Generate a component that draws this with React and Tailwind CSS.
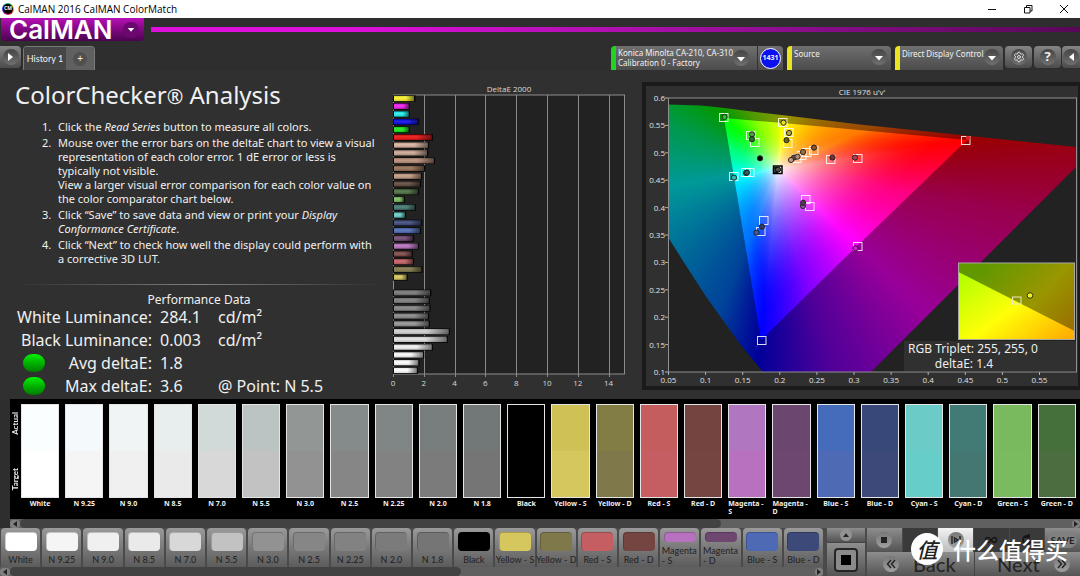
import React from "react";
import { Settings } from "lucide-react";

const patches = [
  ["White", "#fbfeff", "#ffffff"],
  ["N 9.25", "#f4f9fb", "#f5f5f5"],
  ["N 9.0", "#f0f4f5", "#f0f0f0"],
  ["N 8.5", "#e8eeee", "#eaeaea"],
  ["N 7.0", "#d1dad9", "#d8d8d8"],
  ["N 5.5", "#bbc4c3", "#c2c2c2"],
  ["N 3.0", "#929795", "#929292"],
  ["N 2.5", "#858b8a", "#868686"],
  ["N 2.25", "#808686", "#828282"],
  ["N 2.0", "#787e7e", "#7b7b7b"],
  ["N 1.8", "#717877", "#757575"],
  ["Black", "#000000", "#000000"],
  ["Yellow - S", "#d0c156", "#d5c65e"],
  ["Yellow - D", "#817d45", "#7f784a"],
  ["Red - S", "#c45d5e", "#c45e62"],
  ["Red - D", "#734440", "#744541"],
  ["Magenta - S", "#b077c0", "#b771be"],
  ["Magenta - D", "#6b466e", "#6d4770"],
  ["Blue - S", "#456bbb", "#4e6ab5"],
  ["Blue - D", "#384878", "#3c4979"],
  ["Cyan - S", "#6bcbc6", "#66cdc8"],
  ["Cyan - D", "#427b76", "#447772"],
  ["Green - S", "#7aba5e", "#7abb60"],
  ["Green - D", "#46703b", "#4b6e40"],
];

const bars = [
  ["#f6f22c", 1.36], ["#f21cf0", 1], ["#1ff0f0", 1], ["#0808e8", 1.6],
  ["#18e818", 1], ["#ee1010", 2.5], ["#d8b2a0", 2.25], ["#cba593", 2.2],
  ["#b98d76", 2.63], ["#936c52", 2], ["#c39a84", 1.8], ["#5d473c", 1.73],
  ["#4b6e40", 1.6], ["#7abb60", 0.68], ["#447772", 1.4], ["#66cdc8", 0.75],
  ["#3c4979", 1.8], ["#4e6ab5", 1.73], ["#6d4770", 1.27], ["#b771be", 1.6],
  ["#7c4844", 1.2], ["#c45e62", 1.27], ["#7f784a", 1.83], ["#d5c65e", 0.87],
  ["#000000", 0], ["#757575", 2.4], ["#7b7b7b", 2.3], ["#828282", 2.35],
  ["#868686", 2.25], ["#929292", 2.3], ["#d0d0d0", 3.6], ["#e0e0e0", 3.47],
  ["#f2f2f2", 2.5], ["#fafafa", 1.93], ["#ffffff", 1.63], ["#ffffff", 1.53],
];

const targets = [
  [723.5, 117.5], [782.5, 122.5], [965.5, 140.5], [857.5, 246.5], [761.5, 340.5],
  [733.5, 176.5], [750.5, 135.5], [754.5, 142.5], [788.5, 132.5], [787.5, 143.5],
  [813.5, 150.5], [806.5, 152.5], [801.5, 155.5], [796.5, 158.5], [830.5, 159.5],
  [857.5, 158.5], [749.5, 172.5], [745.5, 172.5], [805.5, 199.5], [809.5, 206.5],
  [763.5, 220.5], [760.5, 231.5],
];

const readings = [
  [724.5, 117, "#22c522"], [783.5, 122.7, "#e8e020"], [789, 133, "#b0a850"],
  [786.5, 140.2, "#6b6322"], [752, 134.3, "#4e9a3e"], [752, 139.2, "#2f6a30"],
  [760, 158.3, "#000000"], [734, 177.7, "#30b8b8"], [746, 173, "#3a6f70"],
  [747, 172.5, "#2f5f62"], [794, 157.5, "#6f4c3c"], [791, 160, "#c09880"],
  [797.5, 156.7, "#b08c78"], [803, 152, "#a07040"], [814, 147.6, "#8a5030"],
  [832.5, 157.5, "#7a3030"], [855, 157.6, "#b04050"], [803, 206, "#94509a"],
  [803.2, 202.8, "#583858"], [762, 226.7, "#303c70"], [756.5, 232.6, "#4458a0"],
  [855.5, 248.3, "#d020d0"],
];

const white = [778, 169];
const gamut = [[724, 118], [783, 123], [967, 140], [857, 246], [761, 340], [734, 177]];
const steps = 60;
const whiteness = (s) => Math.pow(1 - s, 1.9);
const shells = Array.from({ length: steps }, (_, k) => {
  const s = 1 - (k + 1) / (steps + 1);
  const prev = whiteness(1 - k / (steps + 1));
  return {
    points: gamut
      .map(([x, y]) => `${white[0] + s * (x - white[0])},${white[1] + s * (y - white[1])}`)
      .join(" "),
    alpha: 1 - (1 - whiteness(s)) / (1 - prev),
  };
});

const wheel =
  "bg-[conic-gradient(from_0deg_at_110px_71px,#d8ff00_0deg,#ffff00_6deg,#ff7800_66deg,#ff0000_81deg,#ff0080_100deg,#ff00ff_134deg,#8000ff_166deg,#0000ff_186deg,#0070ff_202deg,#00ffff_261deg,#00ff80_292deg,#00ff00_314deg,#80ff00_334deg,#d8ff00_360deg)]";

const raised = "bg-linear-to-b from-[#6f6f6f] to-[#4c4c4c]";
const well = "flex size-4 shrink-0 items-center justify-center rounded-full bg-linear-to-b from-[#454545] to-[#707070]";

function DropArrow() {
  return (
    <span className={well}>
      <svg viewBox="0 0 8 5" className="mt-0.5 h-[5px] w-2" aria-hidden="true">
        <path d="M0 0H8L4 4.6Z" fill="#fff" />
      </svg>
    </span>
  );
}

function DeltaEChart() {
  const x = (v) => 393 + v * 15.4;
  return (
    <svg viewBox="386 80 255 319" className="w-full font-['Open_Sans',sans-serif]" role="img" aria-label="DeltaE 2000">
      <defs>
        <linearGradient id="barEnd" x1="0" x2="1" y1="0" y2="0">
          <stop offset="0.6" stopColor="#000" stopOpacity="0" />
          <stop offset="1" stopColor="#000" stopOpacity="0.5" />
        </linearGradient>
        <linearGradient id="barShade" x1="0" x2="0" y1="0" y2="1">
          <stop offset="0" stopColor="#000" stopOpacity="0.12" />
          <stop offset="0.4" stopColor="#fff" stopOpacity="0.12" />
          <stop offset="1" stopColor="#000" stopOpacity="0.15" />
        </linearGradient>
      </defs>
      <rect x="393.5" y="95" width="231" height="279" fill="#222" stroke="#8c8c8c" />
      {[2, 4, 6, 8, 10, 12, 14].map((v) => (
        <path key={v} d={`M${Math.round(x(v)) + 0.5} 95V377`} stroke="#8a8a8a" />
      ))}
      <path d="M393.5 374V377" stroke="#8a8a8a" />
      {bars.map(([color, v], i) =>
        v === 0 ? null : (
          <g key={i}>
            <rect x="393" y={95.3 + i * 7.77} width={v * 15.4 + 1.5} height="6.6" fill="#080808" />
            <rect x="394" y={95.9 + i * 7.77} width={v * 15.4 - 1} height="5.2" fill={color} />
            <rect x="394" y={95.9 + i * 7.77} width={v * 15.4 - 1} height="5.2" fill="url(#barShade)" />
            <rect x="394" y={95.9 + i * 7.77} width={v * 15.4 - 1} height="5.2" fill="url(#barEnd)" />
          </g>
        )
      )}
      <g fill="#d8d8d8" textAnchor="middle" className="text-[8px]">
        <text x="509" y="92">DeltaE 2000</text>
        {[0, 2, 4, 6, 8, 10, 12, 14].map((v) => (
          <text key={v} x={x(v)} y="386">{v}</text>
        ))}
      </g>
    </svg>
  );
}

function CieChart() {
  const ys = ["0.6", "0.55", "0.5", "0.45", "0.4", "0.35", "0.3", "0.25", "0.2", "0.15", "0.1"];
  const xs = ["0.05", "0.1", "0.15", "0.2", "0.25", "0.3", "0.35", "0.4", "0.45", "0.5", "0.55"];
  return (
    <svg viewBox="641 80 439 319" className="w-full" role="img" aria-label="CIE 1976 u'v'">
      <defs>
        <clipPath id="locus">
          <path d="M668 104.5L700 105.5Q716 106.500 740 110L790 116L860 124.500L1076 147V167L1013 230L871 372H763L740 344L707 298Q686 266 668 237Z" />
        </clipPath>
        <clipPath id="gamut">
          <polygon points={gamut.map((p) => p.join(",")).join(" ")} />
        </clipPath>
        <linearGradient id="insetOuter" x1="0" x2="1" y1="0.2" y2="0.8">
          <stop offset="0.1" stopColor="#619800" />
          <stop offset="0.62" stopColor="#999600" />
          <stop offset="1" stopColor="#997000" />
        </linearGradient>
        <linearGradient id="insetInner" x1="0" x2="1" y1="0.1" y2="0.9">
          <stop offset="0" stopColor="#b4ff00" />
          <stop offset="0.5" stopColor="#ffff08" />
          <stop offset="1" stopColor="#ffae00" />
        </linearGradient>
      </defs>
      <rect x="642" y="82" width="438" height="308" fill="#1b1b1b" />
      <rect x="646" y="86" width="432" height="300" fill="#303030" />
      <rect x="668.5" y="98" width="408" height="274" fill="#222" />
      <g clipPath="url(#locus)">
        <foreignObject x="668" y="98" width="408" height="274">
          <div className={`h-[274px] w-[408px] brightness-60 ${wheel}`} />
        </foreignObject>
      </g>
      <g clipPath="url(#gamut)">
        <foreignObject x="668" y="98" width="408" height="274">
          <div className={`h-[274px] w-[408px] ${wheel}`} />
        </foreignObject>
      </g>
      {shells.map((s, i) => (
        <polygon key={i} points={s.points} fill="#fff" fillOpacity={s.alpha} />
      ))}
      <rect x="668.5" y="98" width="408" height="274" fill="none" stroke="#909090" />
      <g stroke="#b0b0b0">
        {ys.map((v, i) => (
          <path key={v} d={`M665 ${98 + i * 27.4}H668`} />
        ))}
        {xs.map((v, i) => (
          <path key={v} d={`M${668.5 + i * 37.1} 372V375`} />
        ))}
      </g>
      <g fill="none" stroke="#fff">
        {targets.map(([x, y], i) => (
          <rect key={i} x={x - 4} y={y - 4} width="8.500" height="8" strokeOpacity="0.85" />
        ))}
      </g>
      <rect x="773.5" y="166" width="8.500" height="7.500" fill="#fff" stroke="#000" strokeWidth="1.5" />
      <circle cx="776" cy="170" r="2.8" fill="#444" stroke="#000" />
      <circle cx="778" cy="169.500" r="2.600" fill="#555" stroke="#000" />
      {readings.map(([x, y, c], i) => (
        <circle key={i} cx={x} cy={y} r="2.6" fill={c} stroke="#1c1c1c" strokeWidth="0.9" />
      ))}
      <circle cx="968" cy="138" r="2.300" fill="#e02020" />
      <circle cx="757" cy="347" r="1.800" fill="#1010b4" />
      <rect x="904" y="341" width="172" height="30" fill="#303030" />
      <rect x="958.5" y="263" width="116" height="76.500" fill="url(#insetOuter)" />
      <path d="M958.500 272L1074.500 331V339.500H958.500Z" fill="url(#insetInner)" />
      <rect x="958.5" y="263" width="116" height="76.5" fill="none" stroke="#a8a8a0" />
      <rect x="1012.500" y="297" width="8.500" height="7" fill="none" stroke="#eee8c0" />
      <circle cx="1030" cy="295.500" r="2.800" fill="#f4f020" stroke="#333300" />
      <g fill="#e0e0e0" className="font-['Open_Sans',sans-serif] text-[8px]">
        <text x="862" y="95" textAnchor="middle">CIE 1976 u&apos;v&apos;</text>
        {ys.map((v, i) => (
          <text key={v} x="665" y={101 + i * 27.4} textAnchor="end">{v}</text>
        ))}
        {xs.map((v, i) => (
          <text key={v} x={668.5 + i * 37.1} y="383" textAnchor="middle">{v}</text>
        ))}
      </g>
      <g fill="#eee" className="text-[12px]" textAnchor="middle">
        <text x="973" y="353">RGB Triplet: 255, 255, 0</text>
        <text x="964" y="368">deltaE: 1.4</text>
      </g>
    </svg>
  );
}

function Metric({ label, value, note, ok }) {
  return (
    <div className="flex h-[23px] items-center text-[16px]">
      <dt className="flex w-[152px] items-center justify-end">
        {ok && (
          <span className="mr-auto ml-[23px] h-[18px] w-[22px] rounded-full bg-linear-to-b from-[#00f000] to-[#007a00]" />
        )}
        <span className="whitespace-nowrap">{label}</span>
      </dt>
      <dd className="ml-2 w-[58px]">{value}</dd>
      <dd className="whitespace-nowrap">{note}</dd>
    </div>
  );
}

function ScrollRow({ thumb }) {
  return (
    <div className="flex h-[9px] items-center bg-[#606060]">
      <button aria-label="Scroll left" className="flex h-2 w-2.5 items-center justify-center rounded-sm bg-[#808080]">
        <svg viewBox="0 0 4 6" className="h-1.5 w-1"><path d="M4 0V6L0 3Z" fill="#222" /></svg>
      </button>
      <div className="h-full flex-1">
        <div className={`h-full rounded-full bg-[#424242] ${thumb}`} />
      </div>
      <button aria-label="Scroll right" className="flex h-2 w-2 items-center justify-center rounded-sm bg-[#808080]">
        <svg viewBox="0 0 4 6" className="h-1.5 w-1"><path d="M0 0V6L4 3Z" fill="#222" /></svg>
      </button>
    </div>
  );
}

const metal = "bg-linear-to-b from-[#8e8e8e] to-[#545454]";
const knob = "flex size-4 items-center justify-center rounded-full bg-linear-to-b from-[#777] to-[#a0a0a0] text-[#222]";
const tool = "flex h-[22px] items-center justify-center bg-linear-to-b from-[#858585] to-[#4c4c4c]";

export default function App() {
  return (
    <div className="flex min-h-screen flex-col overflow-hidden bg-[#2e2e2e] font-['Noto_Sans','Noto_Sans_CJK_SC',sans-serif] text-[#f0f0f0]">
      <header>
        <div className="flex h-[18px] items-center bg-white text-black">
          <span className="ml-0.5 flex size-3 items-center justify-center rounded-full bg-[conic-gradient(#00c060,#e8d020,#e02020,#c020c0,#2040e0,#00c060)]">
            <span className="flex size-2.5 items-center justify-center rounded-full bg-black text-[5px] font-bold text-white">CM</span>
          </span>
          <h1 className="ml-1 font-['Open_Sans',sans-serif] text-[10px]">CalMAN 2016 CalMAN ColorMatch</h1>
          <div className="ml-auto flex items-center gap-[26px] pr-[11px]">
            <button aria-label="Minimize">
              <svg viewBox="0 0 10 10" className="size-2.5"><path d="M1 5.500H9" stroke="#111" /></svg>
            </button>
            <button aria-label="Restore">
              <svg viewBox="0 0 10 10" className="size-2.5" fill="none" stroke="#111">
                <path d="M1.500 3.500H7V9H1.500ZM3.500 3.500V1.500H9V7H7" />
              </svg>
            </button>
            <button aria-label="Close">
              <svg viewBox="0 0 10 10" className="size-2.5"><path d="M1 1L9 9M9 1L1 9" stroke="#111" /></svg>
            </button>
          </div>
        </div>
        <div className="flex h-[23px] items-center">
          <button className="ml-px flex h-full w-[143px] items-center justify-between rounded-b-sm bg-linear-to-b from-[#b80fb6] to-[#4c0350] pr-[5px] pl-2 font-['Inter','Open_Sans',sans-serif] text-[26px] leading-[23px] font-semibold text-white">
            CalMAN
            <span className="flex size-4 items-center justify-center rounded-full bg-[#6a0870]">
              <svg viewBox="0 0 8 5" className="h-1 w-2"><path d="M0 0H8L4 4.600Z" fill="#fff" /></svg>
            </span>
          </button>
          <div className="ml-[7px] h-[5px] flex-1 bg-linear-to-r from-[#e010dc] from-20% via-[#b010b0] via-50% to-[#580858]" />
        </div>
        <nav className="flex h-[29px] items-end justify-between text-[8px]">
          <div className="flex">
            <button aria-label="Expand" className={`mb-0.5 w-[21px] rounded-r ${tool}`}>
              <span className={well}>
                <svg viewBox="0 0 5 8" className="h-2 w-[5px]"><path d="M0 0V8L5 4Z" fill="#fff" /></svg>
              </span>
            </button>
            <div className="ml-0.5 flex h-6 overflow-hidden rounded-t border border-b-0 border-[#7a7a7a]">
              <button className="w-[42px] bg-[#464646] font-['Lato',sans-serif] text-[9px] whitespace-nowrap">History 1</button>
              <button aria-label="Add tab" className="flex w-7 items-center justify-center bg-[#606060]">
                <span className="flex size-3.5 items-center justify-center rounded-full bg-[#505050] text-[10px]">+</span>
              </button>
            </div>
          </div>
          <div className="flex">
            <div className={`flex h-6 w-[172px] overflow-hidden rounded-t border-l-[5px] border-[#22d422] ${raised}`}>
              <button className="flex flex-1 items-center justify-between pr-2 pl-0.5 text-left leading-[10px] whitespace-nowrap">
                <span>Konica Minolta CA-210, CA-310<br />Calibration 0 - Factory</span>
                <DropArrow />
              </button>
              <div className="flex w-7 items-center justify-center border-l border-[#333]">
                <span className="flex size-[21px] items-center justify-center rounded-full border border-white bg-[#0c10ee] text-[7px] font-bold">1431</span>
              </div>
            </div>
            <button className={`ml-1 flex h-6 w-[104px] justify-between rounded-t border-l-[5px] border-[#eae51e] pt-[3px] pr-1 pl-0.5 leading-[10px] ${raised}`}>
              Source<DropArrow />
            </button>
            <button className={`ml-1 flex h-6 w-[108px] justify-between rounded-t border-l-[5px] border-[#eae51e] pt-[3px] pr-1 pl-0.5 leading-[10px] whitespace-nowrap ${raised}`}>
              Direct Display Control<DropArrow />
            </button>
            <button aria-label="Settings" className={`ml-0.5 w-[27px] rounded ${tool}`}>
              <span className={well}><Settings className="size-3 text-[#ddd]" /></span>
            </button>
            <button aria-label="Help" className={`ml-0.5 w-[27px] rounded text-[13px] font-bold ${tool}`}>
              <span className={well}>?</span>
            </button>
            <button aria-label="Collapse" className={`ml-px w-[18px] rounded-l ${tool}`}>
              <span className={well}>
                <svg viewBox="0 0 5 8" className="h-2 w-[5px]"><path d="M5 0V8L0 4Z" fill="#fff" /></svg>
              </span>
            </button>
          </div>
        </nav>
      </header>

      <main className="grid grid-cols-[386fr_255fr_439fr] bg-[#303030] pt-2.5">
        <section className="min-w-0">
          <h2 className="pl-[15px] text-[24px] leading-[30px] whitespace-nowrap">ColorChecker<span className="text-[20px]">®</span> Analysis</h2>
          <ol className="mt-2 flex list-decimal flex-col gap-0.5 pl-[54px] text-[11px] leading-[14px] [&>li]:pl-1">
            <li>Click the <em>Read Series</em> button to measure all colors.</li>
            <li className="whitespace-nowrap">
              Mouse over the error bars on the deltaE chart to view a visual<br />
              representation of each color error. 1 dE error or less is<br />
              typically not visible.<br />
              View a larger visual error comparison for each color value on<br />
              the color comparator chart below.
            </li>
            <li className="whitespace-nowrap">Click “Save” to save data and view or print your <em>Display<br />Conformance Certificate</em>.</li>
            <li className="whitespace-nowrap">Click “Next” to check how well the display could perform with<br />a corrective 3D LUT.</li>
          </ol>
          <div className="mt-[18px] mr-1 ml-4 h-px bg-linear-to-r from-transparent via-[#808080] to-transparent" />
          <h3 className="mt-2.5 pl-3 text-center text-[12px] leading-[10px]">Performance Data</h3>
          <dl>
            <Metric label="White Luminance:" value="284.1" note="cd/m²" />
            <Metric label="Black Luminance:" value="0.003" note="cd/m²" />
            <Metric label="Avg deltaE:" value="1.8" ok />
            <Metric label="Max deltaE:" value="3.6" note="@ Point: N 5.5" ok />
          </dl>
        </section>
        <DeltaEChart />
        <CieChart />
      </main>

      <section className="pl-2.5">
        <div className="flex h-[120px] bg-black pt-[5px] pr-1">
          <div className="flex h-[94px] w-[11px] flex-col-reverse justify-between py-2 font-['Lato',sans-serif] text-[8px] leading-[11px] font-bold">
            <span className="[writing-mode:vertical-rl] rotate-180">Target</span>
            <span className="[writing-mode:vertical-rl] rotate-180">Actual</span>
          </div>
          <ul className="flex flex-1 gap-1.5">
            {patches.map(([name, actual, target]) => (
              <li key={name} className="min-w-0 flex-1">
                <div className="flex h-[94px] flex-col border border-[#e4e4e4]">
                  <div className="flex-1" style={{ backgroundColor: actual }} />
                  <div className="flex-1" style={{ backgroundColor: target }} />
                </div>
                <p className={`mt-0.5 text-[7px] leading-[8px] font-bold ${name.startsWith("Mag") ? "" : "text-center whitespace-nowrap"}`}>{name}</p>
              </li>
            ))}
          </ul>
        </div>
        <ScrollRow thumb="w-2/3" />
      </section>

      <footer className="relative flex h-12 bg-[#4a4a4a] font-['Lato','Noto_Sans_CJK_SC',sans-serif] text-[#262626]">
        <div className="min-w-0 flex-1">
          <div className="flex h-[39px] gap-0.5 pl-px">
            {patches.slice(0, 20).map(([name, , target]) => {
              const wrap = name.startsWith("Mag");
              return (
                <button key={name} className="flex min-w-0 flex-1 flex-col items-center rounded-t-sm bg-linear-to-b from-[#9a9a9a] to-[#5c5c5c] pt-1">
                  <span
                    className={`w-8 shrink-0 rounded-sm border-t border-l border-black/20 ${wrap ? "h-2.5" : "h-[19px]"}`}
                    style={{ backgroundColor: target }}
                  />
                  <span className={`mt-1 text-[9px] font-medium ${wrap ? "w-[36px] text-left leading-[10px]" : "leading-[10px] whitespace-nowrap"}`}>{name}</span>
                </button>
              );
            })}
          </div>
          <ScrollRow thumb="w-[56%]" />
        </div>
        <div className="ml-1 flex w-[38px] flex-col gap-px bg-[#444]">
          <button aria-label="Up" className={`flex h-3.5 items-center justify-center ${metal}`}>
            <span className="flex size-3 items-center justify-center rounded-full bg-[#929292]">
              <svg viewBox="0 0 8 5" className="h-1 w-1.5"><path d="M0 5H8L4 0Z" fill="#222" /></svg>
            </span>
          </button>
          <button aria-label="Stop" className={`flex flex-1 items-center justify-center ${metal}`}>
            <span className="flex size-6 items-center justify-center rounded border-2 border-[#252525] bg-[#8a8a8a]">
              <span className="size-2.5 bg-black" />
            </span>
          </button>
        </div>
        <div className="ml-0.5 flex w-[213px] flex-col">
          <div className="grid h-6 grid-cols-6 gap-px">
            <button aria-label="Stop reading" className={`flex items-center justify-center ${metal}`}>
              <span className={knob}><span className="size-1.5 bg-[#222]" /></span>
            </button>
            <button aria-label="Read" className="bg-[#3a3a3a]" />
            <button aria-label="Read series" className="flex items-center justify-center bg-linear-to-b from-[#f4f4f4] to-[#bcbcbc]">
              <span className={knob}>
                <svg viewBox="0 0 10 8" className="h-2 w-2.5" fill="none" stroke="#222" strokeWidth="1.400"><path d="M1 0V8M9 0V8M3.500 2V6L7 4Z" /></svg>
              </span>
            </button>
            <button aria-label="Continuous" className="flex items-center justify-center bg-[#3a3a3a]">
              <svg viewBox="0 0 14 8" className="h-2 w-3.5" fill="none" stroke="#151515" strokeWidth="1.500"><path d="M7 4C5 1 1.500 0.500 1.500 4S5 7 7 4S12.500 0.500 12.500 4S9 7 7 4Z" /></svg>
            </button>
            <button aria-label="Refresh" className="flex items-center justify-center bg-[#3a3a3a]">
              <svg viewBox="0 0 12 12" className="size-3" fill="none" stroke="#151515" strokeWidth="1.800"><path d="M10 6A4 4 0 1 1 8 2.500M8 0V3.500H4.500" /></svg>
            </button>
            <button className={`flex items-center justify-center text-[10px] font-bold ${metal}`}>
              <span className="rounded-full bg-[#808080] px-0.5 leading-4">SAVE</span>
            </button>
          </div>
          <div className="flex h-6 gap-px bg-[#444] text-[20px] leading-6 font-medium">
            <button className={`flex w-[107px] items-center gap-3.5 pl-4 ${metal}`}>
              <span className={knob}>
                <svg viewBox="0 0 10 10" className="size-2.5" fill="none" stroke="#222" strokeWidth="1.400"><path d="M5 1L1.500 5L5 9M9 1L5.500 5L9 9" /></svg>
              </span>
              Back
            </button>
            <button className={`flex flex-1 items-center justify-between pr-2.5 pl-[22px] ${metal}`}>
              Next
              <span className={knob}>
                <svg viewBox="0 0 10 10" className="size-2.5" fill="none" stroke="#222" strokeWidth="1.400"><path d="M1 1L4.500 5L1 9M5 1L8.500 5L5 9" /></svg>
              </span>
            </button>
          </div>
        </div>
        <div className="pointer-events-none absolute top-[5px] right-3 flex items-center gap-2.5 font-['Noto_Sans_CJK_SC',sans-serif] text-[23px] leading-8 font-medium text-white">
          <span className="flex size-8 items-center justify-center rounded-full bg-white text-[21px] text-[#222] italic">值</span>
          什么值得买
        </div>
      </footer>
    </div>
  );
}
